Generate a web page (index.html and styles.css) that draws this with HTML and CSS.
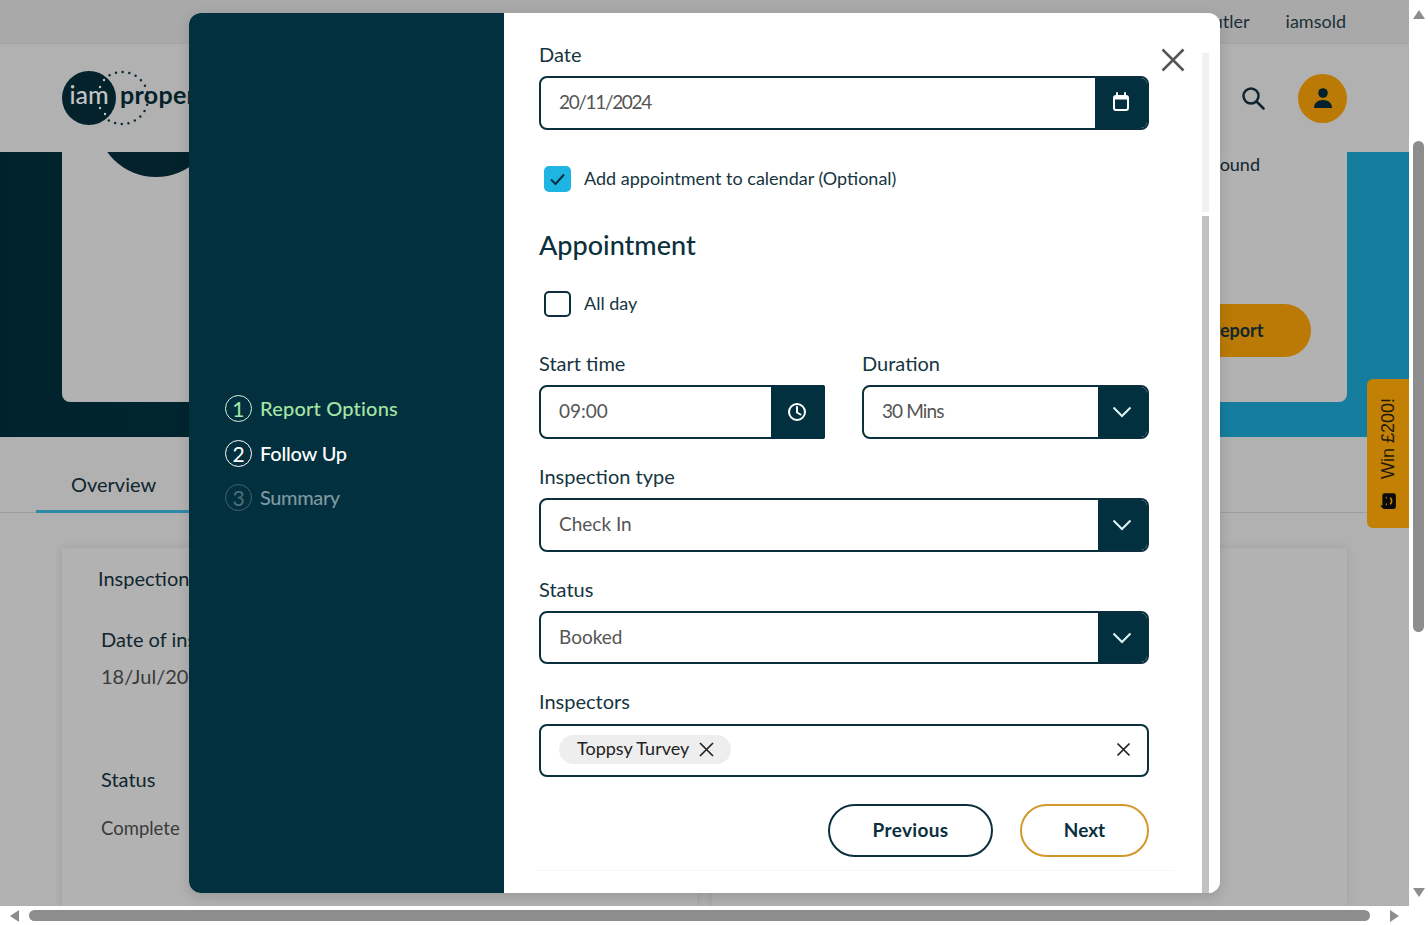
FILE: index.html
```html
<!DOCTYPE html>
<html lang="en">
<head>
<meta charset="utf-8">
<title>Inspection follow up</title>
<link rel="stylesheet" href="styles.css">
</head>
<body>
<div class="viewport">
  <div class="page">
    <div class="topbar">
      <span>Butler</span>
      <span>iamsold</span>
    </div>
    <header class="nav">
      <svg class="logo" width="180" height="56" viewBox="0 0 180 56">
        <circle class="logo-dots" cx="60" cy="28" r="26"/>
        <circle class="logo-disc" cx="27" cy="28" r="27"/>
        <circle class="logo-seam" cx="42" cy="10" r="1.200"/>
        <circle class="logo-seam" cx="38" cy="17" r="1.200"/>
        <circle class="logo-seam" cx="38" cy="38" r="1.200"/>
        <circle class="logo-seam" cx="43" cy="44" r="1.200"/>
        <text class="logo-iam" x="27" y="34" text-anchor="middle">iam</text>
        <text class="logo-word" x="58" y="34">property</text>
      </svg>
      <div class="nav-actions">
        <svg class="search" width="24" height="24" viewBox="0 0 24 24"><circle cx="10" cy="10" r="7.500"/><path d="M15.500 15.500 22.500 22.500"/></svg>
        <div class="avatar">
          <svg width="20" height="22" viewBox="0 0 20 22"><circle cx="10" cy="6" r="4.800"/><path d="M1 21c0-5 3.600-8 9-8s9 3 9 8z"/></svg>
        </div>
      </div>
    </header>
    <section class="hero">
      <div class="hero-card">
        <div class="hero-disc"></div>
        <div class="hero-side">
          <span class="hero-note">Property sound</span>
          <span class="hero-btn">View report</span>
        </div>
      </div>
    </section>
    <div class="tabs"><span class="tab">Overview</span></div>
    <section class="cards">
      <article class="card">
        <h3 class="card-title">Inspection details</h3>
        <p class="card-label">Date of inspection</p>
        <p class="card-date">18/Jul/2024</p>
        <p class="card-label card-status">Status</p>
        <p class="card-value">Complete</p>
      </article>
      <article class="card card-wide"></article>
    </section>
    <aside class="win">
      <span>Win £200!</span>
      <svg width="18" height="18" viewBox="0 0 16 16"><path class="win-bag" d="M1 4 4 1v2h9a2 2 0 0 1 2 2v8a2 2 0 0 1-2 2H3a2 2 0 0 1-2-2z"/><path class="win-smile" d="M5 6v1M11 6v1M5 10c1.500 1.600 4.500 1.600 6 0"/></svg>
    </aside>

    <div class="modal" role="dialog">
      <nav class="steps">
        <div class="step step-done"><span class="step-num">1</span>Report Options</div>
        <div class="step step-current"><span class="step-num">2</span>Follow Up</div>
        <div class="step step-todo"><span class="step-num">3</span>Summary</div>
      </nav>
      <div class="panel">
        <form class="form">
          <div class="field">
            <label class="label">Date</label>
            <div class="control">
              <span class="value value-date">20/11/2024</span>
              <span class="addon addon-date">
                <svg width="18" height="20" viewBox="0 0 18 20"><rect class="ic" x="2" y="4" width="14" height="14" rx="2"/><path class="ic" d="M5 1v4M13 1v4"/><path class="ic-fill" d="M2 4h14v3.500H2z"/></svg>
              </span>
            </div>
          </div>
          <div class="check-row check-row-first">
            <span class="box box-on"><svg width="17" height="14" viewBox="0 0 17 14"><path d="M2 7.500 6.500 12 15 2.500"/></svg></span>
            <span class="check-text">Add appointment to calendar (Optional)</span>
          </div>
          <h2 class="heading">Appointment</h2>
          <div class="check-row">
            <span class="box"></span>
            <span class="check-text">All day</span>
          </div>
          <div class="split">
            <div class="field">
              <label class="label">Start time</label>
              <div class="control control-square">
                <span class="value">09:00</span>
                <span class="addon addon-clock">
                  <svg width="20" height="20" viewBox="0 0 20 20"><circle class="ic" cx="10" cy="10" r="8"/><path class="ic" d="M10 5v5.500l3.500 2"/></svg>
                </span>
              </div>
            </div>
            <div class="field">
              <label class="label">Duration</label>
              <div class="control">
                <span class="value value-mins">30 Mins</span>
                <span class="addon addon-select"><svg width="20" height="12" viewBox="0 0 20 12"><path d="M1.500 1.500 10 10l8.500-8.500"/></svg></span>
              </div>
            </div>
          </div>
          <div class="field">
            <label class="label">Inspection type</label>
            <div class="control">
              <span class="value">Check In</span>
              <span class="addon addon-select"><svg width="20" height="12" viewBox="0 0 20 12"><path d="M1.500 1.500 10 10l8.500-8.500"/></svg></span>
            </div>
          </div>
          <div class="field field-short">
            <label class="label">Status</label>
            <div class="control">
              <span class="value">Booked</span>
              <span class="addon addon-select"><svg width="20" height="12" viewBox="0 0 20 12"><path d="M1.500 1.500 10 10l8.500-8.500"/></svg></span>
            </div>
          </div>
          <div class="field field-short field-last">
            <label class="label">Inspectors</label>
            <div class="control control-tags">
              <span class="chip"><span class="chip-text">Toppsy Turvey</span>
                <svg width="15" height="15" viewBox="0 0 15 15"><path d="M1 1l13 13M14 1 1 14"/></svg>
              </span>
              <svg class="clear" width="15" height="15" viewBox="0 0 15 15"><path d="M1.500 1.500l12 12M13.500 1.500l-12 12"/></svg>
            </div>
          </div>
          <div class="actions">
            <button type="button" class="btn btn-prev">Previous</button>
            <button type="button" class="btn btn-next">Next</button>
          </div>
          <div class="rule"></div>
        </form>
        <div class="panel-scroll"><span class="panel-track"></span><span class="panel-thumb"></span></div>
        <svg class="close" width="24" height="24" viewBox="0 0 24 24"><path d="M1.500 1.500l21 21M22.500 1.500l-21 21"/></svg>
      </div>
    </div>
  </div>
  <div class="vbar"><i class="arrow arrow-up"></i><b class="vthumb"></b><i class="arrow arrow-down"></i></div>
  <div class="hbar"><i class="arrow arrow-left"></i><b class="hthumb"></b><i class="arrow arrow-right"></i></div>
  <div class="corner"></div>
</div>
</body>
</html>
```
FILE: styles.css
```css
* { box-sizing: border-box; }
html, body { margin: 0; padding: 0; overflow: hidden; }
body { font-family: "Lato", "Liberation Sans", sans-serif; color: #0b2f3c; background: #fff; }
p, h2, h3 { margin: 0; font-weight: 400; }

.viewport { width: 1428px; height: 925px; display: grid; grid-template-columns: 1409px 19px; grid-template-rows: 906px 19px; }
.page { position: relative; overflow: hidden; background: #b1b1b1; color: #10262e; }

/* page behind the dialog */
.topbar { height: 44px; background: #a9a9a9; border-bottom: 1px solid #a3a3a3; display: flex; justify-content: flex-end; align-items: center; gap: 36px; padding: 0 63px 2px 0; font-size: 18px; color: #1c2f36; }
.nav { height: 108px; display: flex; align-items: center; justify-content: space-between; padding: 0 62px 0 62px; }
.logo-disc { fill: #03222c; }
.logo-dots { fill: none; stroke: #0c2a34; stroke-width: 2.500; stroke-linecap: round; stroke-dasharray: 0 6.800; }
.logo-seam { fill: #c3c3c3; }
.logo-iam { fill: #c3c3c3; font-size: 25px; font-weight: 500; }
.logo-word { fill: #03222c; font-size: 25px; font-weight: 700; letter-spacing: .3px; }
.nav-actions { display: flex; align-items: center; gap: 33px; }
.search { fill: none; stroke: #10262e; stroke-width: 2.500; stroke-linecap: round; }
.avatar { width: 49px; height: 49px; border-radius: 50%; background: #bb7a05; display: flex; align-items: center; justify-content: center; }
.avatar svg { fill: #03222c; }

.hero { height: 285px; padding: 0 62px 35px; background: linear-gradient(90deg, #00222d 0, #00262f 14%, #157d9e 75%); }
.hero-card { position: relative; height: 100%; background: #b2b2b2; border-radius: 0 0 8px 8px; overflow: hidden; display: flex; justify-content: flex-end; }
.hero-disc { position: absolute; left: 34px; top: -95px; width: 120px; height: 120px; border-radius: 50%; background: #03222c; }
.hero-side { width: 250px; padding: 0 36px 0 0; display: flex; flex-direction: column; align-items: flex-end; }
.hero-note { font-size: 18px; line-height: 24px; margin-right: 51px; white-space: nowrap; }
.hero-btn { margin-top: 128px; height: 53px; width: 190px; border-radius: 27px; background: #bb7a05; font-weight: 700; font-size: 18px; line-height: 53px; text-align: center; color: #10262e; }

.tabs { height: 76px; border-bottom: 1px solid #9d9d9d; padding: 0 0 0 36px; display: flex; align-items: flex-end; }
.tab { width: 220px; height: 100%; padding: 34px 0 0 35px; font-size: 20px; line-height: 24px; border-bottom: 3px solid #2e8ba7; margin-bottom: -1px; }
.cards { display: flex; gap: 15px; padding: 35px 62px 0; }
.card { width: 635px; height: 360px; padding: 18px 36px; background: #b2b2b2; box-shadow: 0 0 8px rgba(0,0,0,.1); }
.card-wide { width: 635px; }
.card-title { font-size: 20px; line-height: 24px; }
.card-label { margin: 37px 0 0 3px; font-size: 20px; line-height: 24px; }
.card-date { margin: 13px 0 0 3px; font-size: 20px; line-height: 24px; color: #3a3a3a; }
.card-status { margin-top: 79px; }
.card-value { margin: 25px 0 0 3px; font-size: 18.500px; line-height: 24px; color: #3a3a3a; }
.win { position: absolute; left: 1367px; top: 379px; width: 42px; height: 149px; border-radius: 6px 0 0 6px; background: #c28005; display: flex; flex-direction: column; align-items: center; gap: 13px; padding: 19px 0 0; }
.win span { writing-mode: vertical-rl; transform: rotate(180deg); font-family: "Liberation Sans", sans-serif; font-size: 18px; line-height: 20px; color: #1f1a0c; white-space: nowrap; }
.win svg { transform: rotate(-90deg); }
.win-bag { fill: #0a0a0a; }
.win-smile { fill: none; stroke: #c28005; stroke-width: 1.500; }

/* dialog */
.modal { position: absolute; left: 189px; top: 13px; width: 1031px; height: 880px; border-radius: 12px; overflow: hidden; background: #fff; display: flex; box-shadow: 0 4px 14px rgba(0,0,0,.14); }
.steps { width: 315px; flex: none; background: #03303e; display: flex; flex-direction: column; justify-content: center; gap: 18px; padding-left: 36px; }
.step { display: flex; align-items: center; gap: 8px; font-size: 20px; line-height: 27px; font-weight: 500; }
.step-num { width: 27px; height: 27px; border: 1.500px solid currentColor; border-radius: 50%; display: flex; align-items: center; justify-content: center; font-size: 21px; font-weight: 400; line-height: 1; }
.step-done { color: #a5e5a5; letter-spacing: .2px; }
.step-done .step-num { border-color: #d6f0e0; }
.step-current { color: #fff; letter-spacing: -.2px; }
.step-todo { color: #7d989f; letter-spacing: -.4px; margin-top: -1px; }
.step-todo .step-num { border-color: #41626c; color: #4f7079; }

.panel { position: relative; flex: 1; display: flex; background: #fff; padding: 30px 0 0 35px; }
.form { width: 610px; flex: none; }
.field { margin-bottom: 26px; }
.label { display: block; height: 24px; margin-bottom: 9px; font-size: 20px; line-height: 22px; color: #16353f; }
.control { height: 54px; border: 2px solid #0b2f3c; border-radius: 8px; display: flex; align-items: center; justify-content: space-between; overflow: hidden; background: #fff; }
.field-short { margin-bottom: 26px; }
.field-short .control { height: 53px; }
.field-last { margin-bottom: 27px; }
.field-last .label { margin-bottom: 10px; }
.value { padding: 0 0 3px 18px; font-size: 19px; color: #555; }
.value-date { letter-spacing: -1.350px; }
.value-mins { letter-spacing: -.9px; }
.addon { width: 54px; height: 54px; margin-right: -2px; flex: none; background: #03303e; display: flex; align-items: center; justify-content: center; }
.addon-date { padding: 0 2px 2px 0; }
.addon-clock { padding-right: 2px; }
.addon-select { width: 51px; padding-right: 3px; }
.addon-select svg { fill: none; stroke: #dff5f5; stroke-width: 2; }
.control-square { border-radius: 8px 2px 2px 8px; overflow: visible; }
.control-square .addon { border-radius: 0 3px 3px 0; }
.ic { fill: none; stroke: #fff; stroke-width: 2; stroke-linecap: round; }
.ic-fill { fill: #fff; }
.check-row { display: flex; align-items: center; gap: 13px; margin: 0 0 35px 5px; height: 26px; font-size: 18px; color: #16353f; }
.check-row-first { margin: 36px 0 36px 5px; }
.check-text { padding-bottom: 2px; }
.box { width: 27px; height: 26px; border: 2px solid #0b2f3c; border-radius: 5px; display: flex; align-items: center; justify-content: center; }
.box-on { background: #1fb5e3; border-color: #1fb5e3; }
.box-on svg { fill: none; stroke: #03303e; stroke-width: 2; }
.heading { height: 36px; margin-bottom: 27px; font-size: 27px; line-height: 34px; font-weight: 500; color: #0b2f3c; }
.split { display: grid; grid-template-columns: 286px 287px; gap: 37px; }
.control-tags { padding: 0 16px 0 18px; }
.chip { height: 29px; margin-top: -2px; padding: 0 17px 0 18px; border-radius: 15px; background: #eee; display: flex; align-items: center; gap: 10px; font-size: 18px; color: #222; }
.chip-text { padding-bottom: 3px; }
.chip svg, .clear { fill: none; stroke: #222; stroke-width: 1.700; }
.clear { margin-top: -2px; }
.actions { display: flex; justify-content: flex-end; gap: 27px; }
.btn { height: 53px; padding: 0 0 3px; border-radius: 27px; background: #fff; font: 700 19px "Lato", "Liberation Sans", sans-serif; color: #0b2f3c; }
.btn-prev { width: 165px; border: 2px solid #0b2f3c; letter-spacing: .35px; }
.btn-next { width: 129px; border: 2px solid #d3982a; }
.rule { width: 640px; margin: 13px 0 0 -4px; border-top: 1px solid #f8f8f8; }
.panel-scroll { width: 7px; margin-left: 53px; margin-top: 10px; display: flex; flex-direction: column; gap: 4px; }
.panel-track { height: 159px; background: #f1f1f1; }
.panel-thumb { flex: 1; background: #c1c1c1; }
.close { position: absolute; right: 35px; top: 35px; fill: none; stroke: #555; stroke-width: 2.500; }

/* browser scrollbars */
.vbar, .hbar { position: relative; background: #fff; }
.vbar { display: flex; flex-direction: column; align-items: center; padding: 10px 0 9px; }
.vthumb { width: 11px; height: 491px; margin-top: 122px; border-radius: 6px; background: #8d8d8d; flex: none; }
.hbar { display: flex; align-items: center; padding: 0 10px; grid-column: 1; }
.hthumb { width: 1341px; height: 11px; margin-left: 10px; border-radius: 6px; background: #8d8d8d; flex: none; }
.corner { background: #fff; }
.arrow { display: block; width: 0; height: 0; border-style: solid; border-color: transparent; flex: none; }
.arrow-up { border-width: 0 6px 9px; border-bottom-color: #8d8d8d; }
.arrow-down { margin-top: auto; border-width: 9px 6px 0; border-top-color: #8d8d8d; }
.arrow-left { border-width: 6px 9px 6px 0; border-right-color: #8d8d8d; }
.arrow-right { margin-left: 20px; border-width: 6px 0 6px 9px; border-left-color: #8d8d8d; }
```
